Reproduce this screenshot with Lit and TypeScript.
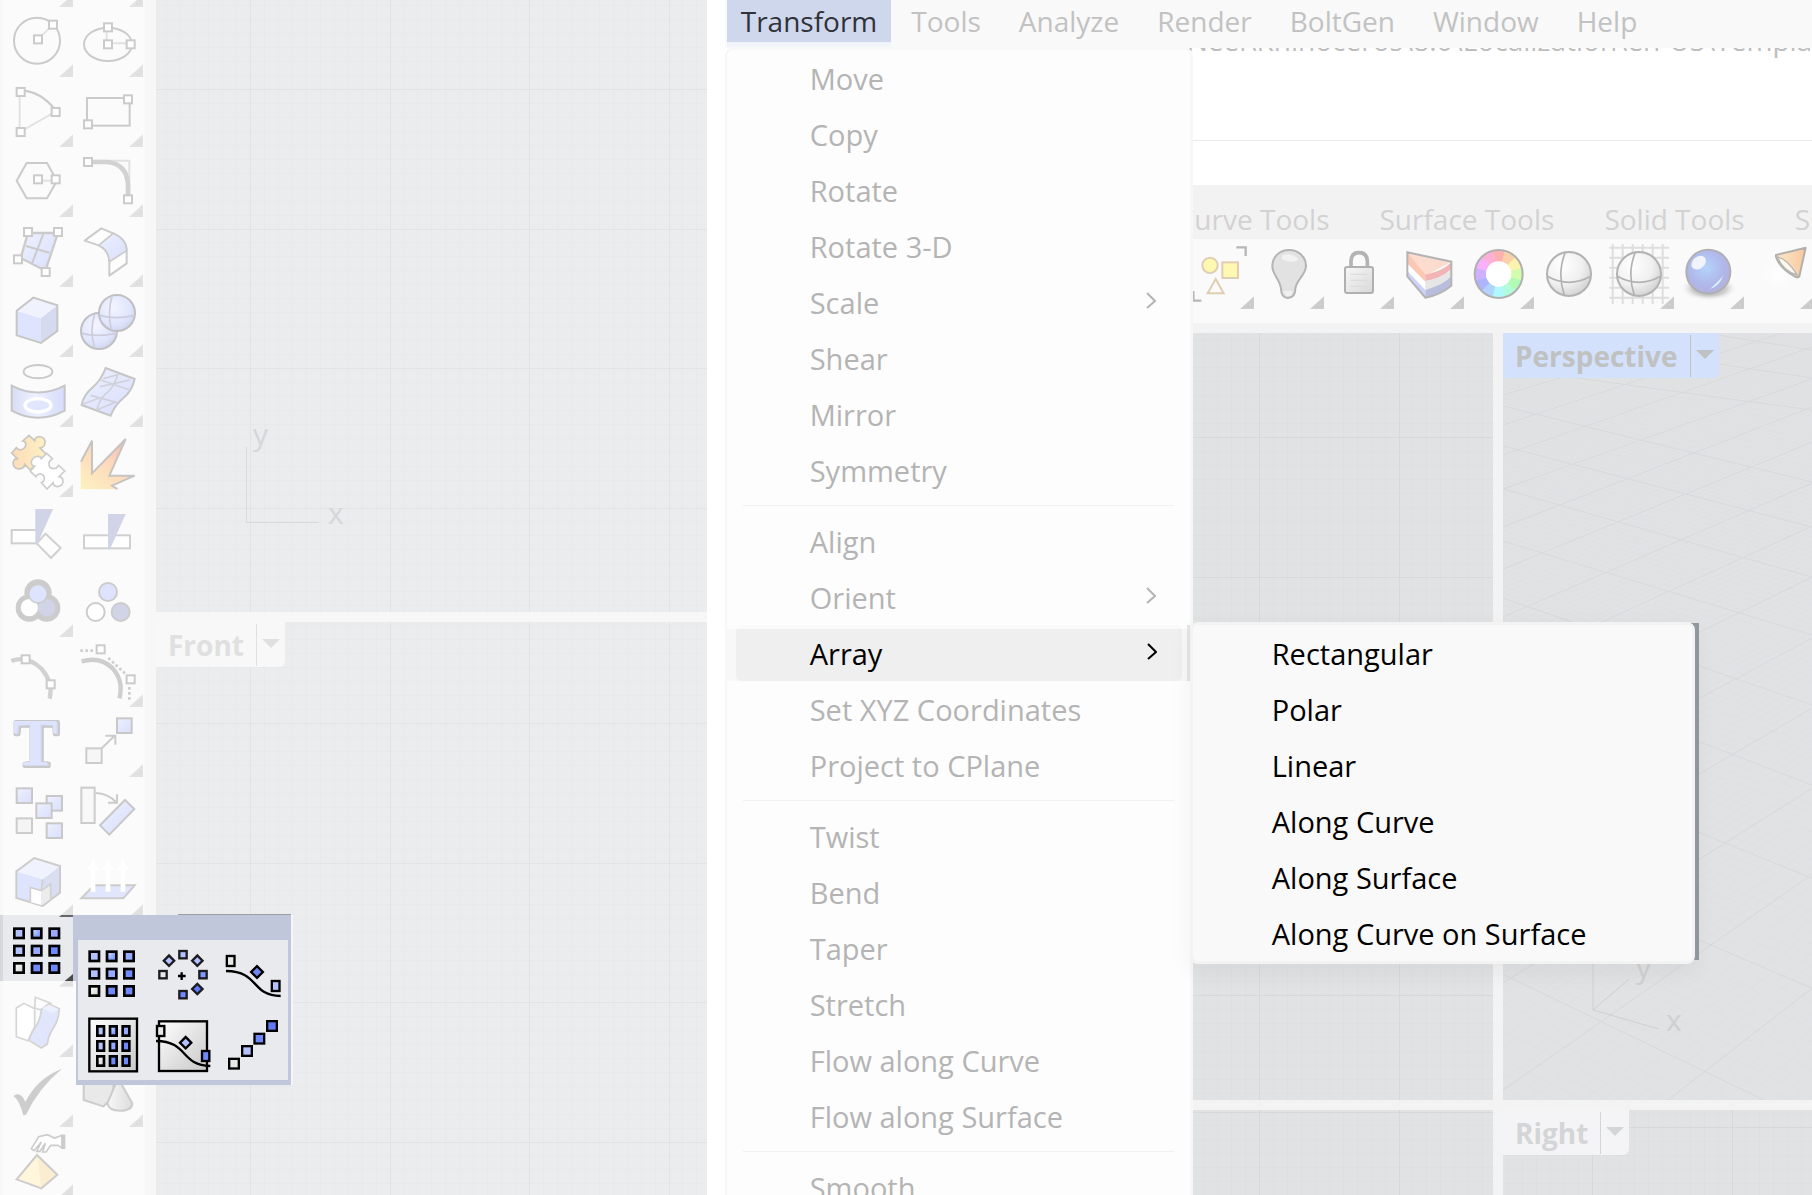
import { LitElement, html, css, svg, nothing } from "lit";
import { customElement, property } from "lit/decorators.js";
import { classMap } from "lit/directives/class-map.js";

/* ---------- shared drawing helpers ---------- */

const G = "#cbcbcb";
const L = "#e2e2e2";

const knob = (x: number, y: number) =>
  svg`<rect x=${x - 12} y=${y - 12} width="24" height="24" fill="#fff" stroke=${G} stroke-width="6"/>`;

const block = (x: number, y: number, fill: string, w = 28, h = 28, line = "#000", sw = 8) =>
  svg`<rect x=${x - w / 2} y=${y - h / 2} width=${w} height=${h} fill=${fill} stroke=${line} stroke-width=${sw}/>`;

const tilt = (x: number, y: number, fill: string, s = 22, line = "#000") =>
  svg`<rect x=${x - s / 2} y=${y - s / 2} width=${s} height=${s} fill=${fill} stroke=${line} stroke-width="7" transform="rotate(45 ${x} ${y})"/>`;

const shades = ["#b3c2ff", "url(#cellBlue)", "#97aaff", "#b3c2ff", "#97aaff", "#7089ff", "url(#cellGrey)", "#7089ff", "#7089ff"];

const nine = (x0: number, y0: number, dx: number, dy: number, w = 28, h = 28) =>
  shades.map((c, i) => block(x0 + (i % 3) * dx, y0 + Math.floor(i / 3) * dy, c, w, h));

const corner = (x: number, y: number) => svg`
  <path d="M${x - 42} ${y} L${x} ${y - 38} V${y} Z" fill="#e2e2e2"/>
  <path d="M${x - 20} ${y - 8} L${x - 7} ${y - 22} V${y - 8} Z" fill="#e6e6e6" stroke="#dadada" stroke-width="2"/>`;

const darkCorner = (x: number, y: number) => svg`
  <path d="M${x - 42} ${y} L${x} ${y - 38} V${y} Z" fill="#cdcdcd"/>
  <path d="M${x - 20} ${y - 8} L${x - 7} ${y - 22} V${y - 8} Z" fill="#d6d6d6" stroke="#c2c2c2" stroke-width="2"/>`;

interface Tool {
  name: string;
  art?: unknown;
  more?: boolean;
}

/* Every row of the tool palette is 210 drawing units high; art repeats its origin every four rows. */
const palette: [Tool, Tool][] = [
  [
    {
      name: "Circle",
      more: true,
      art: svg`<circle cx="111" cy="122" r="69" fill="none" stroke=${G} stroke-width="6"/>
        <path d="M114 118L159 73" stroke=${L} stroke-width="6"/>${knob(159, 74)}${knob(114, 118)}`,
    },
    {
      name: "Ellipse",
      more: true,
      art: svg`<ellipse cx="324" cy="133" rx="72" ry="50" fill="none" stroke=${G} stroke-width="6"/>
        <path d="M320 130V82M324 130H392" stroke=${L} stroke-width="6"/>${knob(324, 82)}${knob(324, 133)}${knob(392, 133)}`,
    },
  ],
  [
    {
      name: "Arc",
      more: true,
      art: svg`<path d="M59 276V396L167 335" fill="none" stroke=${L} stroke-width="6"/>
        <path d="M62 272Q120 272 167 331" fill="none" stroke=${G} stroke-width="7"/>${knob(62, 276)}${knob(62, 396)}${knob(167, 336)}`,
    },
    {
      name: "Rectangle",
      more: true,
      art: svg`<rect x="261" y="294" width="128" height="83" fill="none" stroke=${G} stroke-width="6"/>${knob(384, 298)}${knob(264, 373)}`,
    },
  ],
  [
    {
      name: "Polygon",
      more: true,
      art: svg`<path d="M50 542L80 489H141L171 542L141 595H80Z" fill="none" stroke=${G} stroke-width="6"/>
        <path d="M114 542H165" stroke=${L} stroke-width="6"/>${knob(114, 538)}${knob(167, 538)}`,
    },
    {
      name: "Fillet curves",
      more: true,
      art: svg`<path d="M264 482H388V598" fill="none" stroke=${L} stroke-width="6"/>
        <path d="M264 486H318Q384 490 384 560V598" fill="none" stroke="#d2d2d2" stroke-width="14"/>${knob(264, 486)}${knob(384, 598)}`,
    },
  ],
  [
    {
      name: "Surface from points",
      more: true,
      art: svg`<path d="M84 699H174L136 812L62 774Z" fill="url(#paleBlue)" stroke=${G} stroke-width="7"/>
        <path d="M130 702L96 790M78 738L148 758" stroke=${G} stroke-width="6"/>${knob(84, 696)}${knob(174, 696)}${knob(54, 778)}${knob(137, 816)}`,
    },
    {
      name: "Blend surface",
      more: true,
      art: svg`<path d="M254 722L304 685L340 700Q380 718 380 752V790L328 827V785Q326 750 296 736Z" fill="#fdfdfd" stroke=${G} stroke-width="6" stroke-linejoin="round"/>
        <path d="M296 736L340 700Q380 718 380 752L328 785Q326 750 296 736Z" fill="url(#paleBlue)" stroke=${G} stroke-width="5"/>`,
    },
  ],
  [
    {
      name: "Box",
      more: true,
      art: svg`<path d="M50 92L123 114V189L50 166Z" fill="#dfe4fe"/><path d="M123 114L172 76V153L123 189Z" fill="#d6daee"/>
        <path d="M50 92L100 53L172 76L123 114Z" fill="#f0f2fe"/>
        <path d="M50 92L100 53L172 76V153L123 189L50 166Z" fill="none" stroke="#c6c6c6" stroke-width="6"/>`,
    },
    {
      name: "Boolean union",
      more: true,
      art: svg`<circle cx="297" cy="153" r="54" fill="url(#paleBall)" stroke="#c0c0c2" stroke-width="6"/>
        <path d="M246 160Q290 172 350 160M284 102Q268 150 284 204" fill="none" stroke="#ccd" stroke-width="5"/>
        <circle cx="351" cy="99" r="54" fill="url(#paleBall)" stroke="#c0c0c2" stroke-width="6"/>
        <path d="M300 106Q344 120 404 106M336 48Q322 96 334 150" fill="none" stroke="#ccd" stroke-width="5"/>`,
    },
  ],
  [
    {
      name: "Project curves",
      more: true,
      art: svg`<ellipse cx="114" cy="275" rx="43" ry="20" fill="none" stroke="#cacaca" stroke-width="6"/>
        <path d="M35 317Q114 358 194 317V392Q114 435 35 392Z" fill="url(#paleBand)" stroke="#c6c6c6" stroke-width="6"/>
        <ellipse cx="114" cy="376" rx="39" ry="20" fill="#e2e6fd" stroke="#fff" stroke-width="10"/>`,
    },
    {
      name: "Rebuild surface",
      more: true,
      art: svg`<path d="M317 264L404 297Q396 334 370 354Q342 378 332 407L245 375Q250 346 276 324Q304 300 317 264Z" fill="url(#paleBlue)" stroke="#c6c6c6" stroke-width="6"/>
        <path d="M354 282Q342 318 326 334Q300 352 290 390M302 300L390 330M272 346L352 368M310 296L360 282M300 320L390 300M250 372L304 352M290 390L348 366" fill="none" stroke="#d0d1da" stroke-width="5"/>`,
    },
  ],
  [
    {
      name: "Join",
      more: true,
      art: svg`<path d="M35 519L49 503C56 514 72 510 76 500C80 490 76 485 68 483L87 466L104 482C106 466 132 466 135 484C136 498 126 503 120 504L138 522L91 570L74 553C72 570 46 572 40 554C38 540 44 537 52 536Z" fill="url(#paleOrange)" stroke="#c8c6c2" stroke-width="5"/>
        <path d="M140 520L157 536C140 546 146 567 162 566C172 566 174 558 176 556L194 573L177 590C190 592 192 604 186 614C176 624 160 620 159 608L141 627L124 608C134 604 136 594 130 586C122 578 110 582 108 590L91 574L104 558C92 558 92 544 98 536C106 526 122 528 124 536Z" fill="#fff" stroke="#cdcdcd" stroke-width="5"/>`,
    },
    {
      name: "Explode",
      art: svg`<path d="M242 545L276 480V580L376 477L328 587L404 587L338 617L356 628H242Z" fill="url(#blast)"/>
        <path d="M243 545L276 482V580L377 477L328 587H404L336 617L352 627" fill="none" stroke="#c6c4c2" stroke-width="6"/>`,
    },
  ],
  [
    {
      name: "Trim",
      art: svg`<rect x="35" y="750" width="76" height="40" fill="#fff" stroke="#d0d0d0" stroke-width="6"/>
        <path d="M137 761L182 804L153 834L110 790Z" fill="#fdfdfd" stroke="#d0d0d0" stroke-width="6"/>
        <path d="M106 687H159L112 792L106 790Z" fill="#d0d4e6"/>`,
    },
    {
      name: "Split",
      art: svg`<rect x="252" y="766" width="138" height="39" fill="#fff" stroke="#d0d0d0" stroke-width="6"/>
        <path d="M324 702H377L330 808H324Z" fill="#d0d4e6"/>`,
    },
  ],
  [
    {
      name: "Group",
      more: true,
      art: svg`<circle cx="114" cy="99" r="41" fill="#ccc"/><circle cx="88" cy="144" r="41" fill="#ccc"/><circle cx="140" cy="144" r="41" fill="#ccc"/>
        <circle cx="140" cy="143" r="26" fill="#d0d4e6"/><circle cx="88" cy="143" r="26" fill="#fff"/>
        <circle cx="114" cy="101" r="28" fill="#dfe4fe" stroke="#ccc" stroke-width="5"/>`,
    },
    {
      name: "Ungroup",
      art: svg`<circle cx="324" cy="96" r="27" fill="#dfe4fe" stroke="#ccc" stroke-width="6"/>
        <circle cx="287" cy="156" r="27" fill="#fff" stroke="#ccc" stroke-width="6"/>
        <circle cx="362" cy="156" r="27" fill="#d0d4e6" stroke="#ccc" stroke-width="6"/>`,
    },
  ],
  [
    {
      name: "Edit points",
      art: svg`<path d="M34 303Q82 284 126 328Q160 368 149 416" fill="none" stroke="#d2d2d2" stroke-width="13"/>${knob(77, 298)}${knob(152, 373)}`,
    },
    {
      name: "Control points",
      more: true,
      art: svg`<path d="M245 304Q300 288 338 325Q372 364 358 415" fill="none" stroke="#cecece" stroke-width="13"/>
        <path d="M241 272H285M325 294L378 343M388 381V420" fill="none" stroke="#cecece" stroke-width="8" stroke-dasharray="8 7"/>${knob(302, 268)}${knob(392, 358)}`,
    },
  ],
  [
    {
      name: "Text",
      art: svg`<text x="110" y="619" class="glyph" text-anchor="middle" fill="#d6daee" stroke="#c8c8c8" stroke-width="12" stroke-linejoin="round">T</text>
        <text x="110" y="619" class="glyph" text-anchor="middle" fill="#d3d8ee">T</text>
        <text x="106" y="616" class="glyph" text-anchor="middle" fill="#dfe4fe">T</text>`,
    },
    {
      name: "Move",
      more: true,
      art: svg`${block(373, 497, "url(#paleBlue)", 44, 44, "#c8c8c8", 6)}${block(282, 587, "#f6f6f6", 46, 44, "#ccc", 6)}
        <path d="M305 565L344 527M316 527H346V554" fill="none" stroke="#ccc" stroke-width="6"/>`,
    },
  ],
  [
    {
      name: "Copy",
      art: svg`${block(73, 707, "url(#paleBlue)", 46, 44, "#c8c8c8", 6)}${block(163, 730, "url(#paleBlue)", 46, 44, "#c8c8c8", 6)}
        ${block(132, 752, "url(#paleBlue)", 46, 44, "#c8c8c8", 6)}${block(73, 797, "#f4f4f4", 46, 44, "#ccc", 6)}${block(163, 812, "url(#paleBlue)", 46, 44, "#c8c8c8", 6)}`,
    },
    {
      name: "Rotate",
      art: svg`${block(264, 736, "#f8f8f8", 40, 106, "#ccc", 6)}
        <path d="M375 720L403 747L328 824L300 796Z" fill="url(#paleBlue)" stroke="#c8c8c8" stroke-width="6"/>
        <path d="M287 699Q324 700 350 728M324 728H351V703" fill="none" stroke="#ccc" stroke-width="6"/>`,
    },
  ],
  [
    {
      name: "Solid editing",
      more: true,
      art: svg`<path d="M49 94L128 118V198L49 174Z" fill="#dfe4fe"/><path d="M128 118L180 78V158L128 198Z" fill="#dadef2"/>
        <path d="M49 94L103 54L180 78L128 118Z" fill="#f0f2fe"/>
        <path d="M49 94L103 54L180 78V158L128 198L49 174Z" fill="none" stroke="#ccc" stroke-width="6"/>
        <path d="M91 144L124 152V195L91 186Z" fill="#fff"/><path d="M124 152L152 132V176L126 196Z" fill="#ececec"/>
        <path d="M91 186V142L124 152L152 132V176M124 152L128 118" fill="none" stroke="#d0d0d0" stroke-width="5"/>`,
    },
    {
      name: "Flow along surface",
      more: true,
      art: svg`<path d="M282 136H404L370 175H244Z" fill="#e2e6fd" stroke="#ccc" stroke-width="6"/>
        <path d="M261 90L279 58L297 90H286V155H272V90ZM306 90L324 58L342 90H331V155H317V90ZM351 90L369 58L387 90H376V155H362V90Z" fill="#fff"/>`,
    },
  ],
  [
    { name: "Array" },
    { name: "Align" },
  ],
  [
    {
      name: "Cage edit",
      more: true,
      art: svg`<path d="M49 504L72 490L104 506V560L84 602L49 590Z" fill="#fff" stroke="#d6d6d6" stroke-width="5"/>
        <path d="M106 472L152 490L124 510L104 504Z" fill="#fdfdfd" stroke="#d6d6d6" stroke-width="5"/>
        <path d="M124 508L146 492L178 506Q176 544 156 570Q144 590 142 612L124 624L88 602Q90 584 106 562Q122 540 124 508Z" fill="#e2e6fd" stroke="#d2d2d2" stroke-width="5"/>
        <path d="M126 504L148 494L176 508L158 520Z" fill="#eceffe"/>`,
    },
    { name: "Deform" },
  ],
  [
    {
      name: "Check objects",
      more: true,
      art: svg`<path d="M40 768Q62 752 76 786Q112 714 186 686Q116 744 78 824L70 826Q58 778 40 768Z" fill="#cdcdcd"/>`,
    },
    {
      name: "Primitives",
      more: true,
      art: svg`<path d="M251 722H340V772L310 799L251 780Z" fill="#e9e9e9" stroke="#ccc" stroke-width="6"/>
        <path d="M354 715L397 790Q396 812 360 812Q326 812 322 790Z" fill="url(#greyCone)" stroke="#ccc" stroke-width="6"/>`,
    },
  ],
  [
    {
      name: "Gumball",
      more: true,
      art: svg`<path d="M186 886L164 894L142 884L116 890L94 926L102 932L124 906L110 934H120L136 910L128 936L138 936L152 916H174L186 924Z" fill="#fff" stroke="#ccc" stroke-width="5"/>
        <path d="M184 884H196V927H184Z" fill="#ccc"/>
        <path d="M111 945L50 1018L124 1045Z" fill="#fff6dc"/><path d="M111 945L124 1045L172 1004Z" fill="#faedd0"/>
        <path d="M111 945L50 1018L124 1045L172 1004Z" fill="none" stroke="#ccc" stroke-width="6"/>`,
    },
    { name: "More tools" },
  ],
];

const flyout = [
  { name: "Rectangular array", art: nine(283, 349, 52, 52) },
  {
    name: "Polar array",
    art: svg`${block(549, 344, "#b3c2ff", 22, 22, "#1c1c20", 7)}${tilt(592, 362, "#b3c2ff", 22, "#1c1c20")}${block(609, 404, "#8098ff", 22, 22, "#1c1c20", 7)}
      ${tilt(592, 447, "#5f7bf5", 22, "#1c1c20")}${block(549, 464, "#7089ff", 22, 22, "#1c1c20", 7)}${block(489, 404, "#e8e8e8", 22, 22, "#1c1c20", 7)}
      ${tilt(507, 362, "#b3c2ff", 22, "#1c1c20")}<path d="M545 397V420M534 408H557" stroke="#000" stroke-width="7"/>`,
  },
  {
    name: "Array along curve",
    art: svg`<path d="M678 393C780 394 750 466 842 468" fill="none" stroke="#000" stroke-width="7"/>
      ${block(692, 363, "#e8e8e8", 23, 30, "#000", 7)}${tilt(771, 396, "#6f87ee", 25)}${block(827, 438, "#b3c2ff", 23, 30, "#000", 7)}`,
  },
  {
    name: "Array along surface",
    art: svg`<rect x="268" y="536" width="143" height="158" fill="url(#panel)" stroke="#000" stroke-width="7"/>${nine(302, 573, 38, 45, 20, 28)}`,
  },
  {
    name: "Array along curve on surface",
    art: svg`<rect x="477" y="544" width="144" height="149" fill="url(#panel)" stroke="#000" stroke-width="7"/>
      <path d="M468 603C566 604 540 676 631 678" fill="none" stroke="#000" stroke-width="7"/>
      ${block(482, 573, "#e8e8e8", 22, 30, "#000", 7)}${tilt(557, 608, "#b3c2ff", 24)}${block(617, 648, "#7089ff", 22, 30, "#000", 7)}`,
  },
  {
    name: "Linear array",
    art: svg`${block(816, 558, "#5f7bf5", 29, 29, "#000", 7)}${block(778, 596, "#7089ff", 29, 29, "#000", 7)}
      ${block(741, 633, "#b3c2ff", 29, 29, "#000", 7)}${block(702, 671, "#e8e8e8", 29, 29, "#000", 7)}`,
  },
];

const ball = (cx: number) => svg`
  <circle cx=${cx} cy="117" r="66" fill="url(#greyBall)" stroke="#b2b2b2" stroke-width="6"/>
  <path d="M${cx - 65} 124Q${cx} 160 ${cx + 65} 124M${cx - 12} 54Q${cx - 36} 116 ${cx - 14} 180" fill="none" stroke="#b2b2b2" stroke-width="5"/>`;

const wheel = ["#fcb0b0", "#fcd0a8", "#fcf4ac", "#d4fcac", "#b0fcb4", "#b0fcdc", "#b0f8fc", "#b0d4fc", "#b0b4fc", "#d0b0fc", "#f8b0fc", "#fcb0d8"];
const wedge = (i: number) => {
  const p = (r: number, k: number) => {
    const t = ((k * 30 - 105) * Math.PI) / 180;
    return `${(26 + r * Math.cos(t)).toFixed(1)} ${(117 + r * Math.sin(t)).toFixed(1)}`;
  };
  return `M${p(38, i)}L${p(72, i)}A72 72 0 0 1 ${p(72, i + 1.04)}L${p(38, i + 1.04)}Z`;
};

const ribbon: { name: string; x: number; more?: boolean; art: unknown }[] = [
  {
    name: "Select objects",
    x: -18,
    more: true,
    art: svg`<circle cx="60" cy="91" r="23" fill="#fff8b0" stroke="#e0ceb4" stroke-width="6"/>
      <rect x="97" y="82" width="47" height="47" fill="#fff8b0" stroke="#e0ceb4" stroke-width="6"/>
      <path d="M77 132L101 175H53Z" fill="none" stroke="#e0ceb4" stroke-width="6"/>
      <path d="M139 37H167V63M10 168V197H34" fill="none" stroke="#b6b6b6" stroke-width="7"/>`,
  },
  {
    name: "Show or hide",
    x: 192,
    more: true,
    art: svg`<path d="M298 45C266 45 247 68 247 94C247 120 270 132 273 162Q274 189 294 189Q316 188 316 160C320 132 348 120 348 92C347 66 326 45 298 45Z" fill="#e2e2e2" stroke="#b4b4b4" stroke-width="6"/>
      <path d="M276 62Q304 50 326 74Q300 88 276 72Z" fill="#f2f2f2"/><path d="M280 168H308L302 183H288Z" fill="#f0f0f0"/>`,
  },
  {
    name: "Lock",
    x: 402,
    more: true,
    art: svg`<path d="M483 98V78Q484 53 507 53Q531 53 532 78V98" fill="none" stroke="#b4b4b4" stroke-width="11"/>
      <rect x="465" y="96" width="84" height="78" rx="6" fill="url(#lockFace)" stroke="#b0b0b0" stroke-width="6"/>
      <path d="M482 118H532M482 136H532M482 154H532" stroke="#dcdcdc" stroke-width="4"/>`,
  },
  {
    name: "Layers",
    x: 612,
    more: true,
    art: svg`<path d="M652 52L784 80L706 122Z" fill="#fcdccf"/><path d="M652 52L706 119V140L652 86Z" fill="#fcc8b4"/>
      <path d="M652 86L706 140V165L652 108Z" fill="#fff"/><path d="M652 108L706 165V188L652 124Z" fill="#ccd2fa"/>
      <path d="M706 119Q760 108 784 82V102Q750 134 706 138Z" fill="#f2b4b4"/><path d="M706 138Q760 128 784 102V124Q750 158 706 165Z" fill="#e6e6e6"/>
      <path d="M706 165Q760 150 784 124V152Q750 180 706 188Z" fill="#b8bedc"/>
      <path d="M652 52L784 80V152Q750 180 706 188L652 124Z" fill="none" stroke="#b4b4b4" stroke-width="6"/>`,
  },
  {
    name: "Display colour",
    x: -78,
    more: true,
    art: svg`${wheel.map((c, i) => svg`<path d=${wedge(i)} fill=${c}/>`)}
      <circle cx="26" cy="117" r="38" fill="#fff"/>
      <circle cx="26" cy="117" r="72" fill="none" stroke="#b0b0b0" stroke-width="6"/>`,
  },
  { name: "Shaded viewport", x: 132, art: ball(237) },
  {
    name: "Wireframe viewport",
    x: 342,
    more: true,
    art: svg`<path d="M368 27V207M398 27V207M428 27V207M458 27V207M488 27V207M518 27V207M358 38H537M358 68H537M358 98H537M358 128H537M358 158H537M358 188H537" stroke="#dedede" stroke-width="6"/>${ball(447)}`,
  },
  {
    name: "Rendered viewport",
    x: 552,
    more: true,
    art: svg`<ellipse cx="657" cy="160" rx="86" ry="38" fill="url(#groundShade)"/>
      <circle cx="655" cy="110" r="66" fill="url(#glass)" stroke="#b0b0b4" stroke-width="6"/>
      <ellipse cx="626" cy="83" rx="24" ry="18" transform="rotate(-40 626 83)" fill="#fff" opacity=".8"/>
      <path d="M660 162Q690 152 699 122Q690 134 660 162Z" fill="#d8f4fa"/>`,
  },
  {
    name: "Spotlight",
    x: 762,
    more: true,
    art: svg`<circle cx="860" cy="120" r="60" fill="url(#beam)"/>
      <path d="M858 60L947 38L928 124Q924 130 914 124Q870 100 858 66Z" fill="url(#lampShade)" stroke="#b0b0ac" stroke-width="6" stroke-linejoin="round"/>
      <path d="M862 66Q890 70 922 120Q880 110 862 66Z" fill="#fff8ec" stroke="#b6b6b2" stroke-width="4"/>`,
  },
];

const defs = html`<svg class="defs" width="0" height="0" aria-hidden="true">
  <defs>
    <linearGradient id="paleBlue" x1="0" y1="0" x2="1" y2="1"><stop offset="0" stop-color="#eef1fe" /><stop offset="1" stop-color="#d9defd" /></linearGradient>
    <linearGradient id="paleBand"><stop offset="0" stop-color="#d8ddf4" /><stop offset=".45" stop-color="#eef1fe" /><stop offset="1" stop-color="#d6dcfb" /></linearGradient>
    <radialGradient id="paleBall" cx=".4" cy=".35" r=".7"><stop offset="0" stop-color="#f4f5fe" /><stop offset=".7" stop-color="#dfe4fd" /><stop offset="1" stop-color="#cfd4ec" /></radialGradient>
    <linearGradient id="paleOrange"><stop offset="0" stop-color="#fddcb8" /><stop offset="1" stop-color="#fdf0c4" /></linearGradient>
    <linearGradient id="blast" x1="0" y1="1" x2=".8" y2="0"><stop offset="0" stop-color="#fdf2c0" /><stop offset=".6" stop-color="#fdd8bc" /><stop offset="1" stop-color="#f9b8b0" /></linearGradient>
    <linearGradient id="greyCone"><stop offset="0" stop-color="#f8f8f8" /><stop offset="1" stop-color="#dcdcdc" /></linearGradient>
    <radialGradient id="cellBlue" cx=".3" cy=".3" r=".8"><stop offset="0" stop-color="#b8d0ff" /><stop offset="1" stop-color="#6f88f8" /></radialGradient>
    <linearGradient id="cellGrey" x1="0" y1="0" x2="1" y2="1"><stop offset="0" stop-color="#fff" /><stop offset="1" stop-color="#cfcfcf" /></linearGradient>
    <linearGradient id="panel" x1="0" y1="0" x2="1" y2="1"><stop offset="0" stop-color="#fff" /><stop offset="1" stop-color="#c8c8c8" /></linearGradient>
    <radialGradient id="greyBall" cx=".35" cy=".3" r=".75"><stop offset="0" stop-color="#fff" /><stop offset=".6" stop-color="#f0f0f0" /><stop offset="1" stop-color="#d2d2d2" /></radialGradient>
    <linearGradient id="lockFace" x1="0" y1="0" x2="1" y2="1"><stop offset="0" stop-color="#f8f8f8" /><stop offset="1" stop-color="#d8d8d8" /></linearGradient>
    <radialGradient id="glass" cx=".45" cy=".4" r=".65"><stop offset="0" stop-color="#b4d4fb" /><stop offset=".6" stop-color="#b0b8ea" /><stop offset="1" stop-color="#b4b0dc" /></radialGradient>
    <radialGradient id="groundShade"><stop offset="0" stop-color="#b4b4b4" /><stop offset=".6" stop-color="#cccccc" /><stop offset="1" stop-color="#fafafa" stop-opacity="0" /></radialGradient>
    <radialGradient id="beam"><stop offset="0" stop-color="#fff" /><stop offset="1" stop-color="#fafafa" stop-opacity="0" /></radialGradient>
    <linearGradient id="lampShade"><stop offset="0" stop-color="#fce8c8" /><stop offset="1" stop-color="#f8c8a0" /></linearGradient>
  </defs>
</svg>`;

/* ---------- viewport grids ---------- */

@customElement("plan-grid")
export class PlanGrid extends LitElement {
  @property({ type: Number }) ox = 0;
  @property({ type: Number }) oy = 0;
  @property() minor = "#e8e9eb";
  @property() major = "#e1e3e5";

  static styles = css`
    :host {
      display: block;
      position: absolute;
      inset: 0;
    }
    .sheet {
      display: block;
      width: 100%;
      height: 100%;
    }
  `;

  private path(every: boolean) {
    let d = "";
    for (let i = -60; i < 140; i++) {
      if ((i % 10 === 0) !== every) continue;
      const x = this.ox + Math.round((i * 279) / 20);
      const y = this.oy + Math.round((i * 279) / 20);
      if (x >= 0) d += `M${x} 0V2400`;
      if (y >= 0) d += `M0 ${y}H2400`;
    }
    return d;
  }

  render() {
    return html`<svg class="sheet" shape-rendering="crispEdges" aria-hidden="true">
      <path d=${this.path(false)} stroke=${this.minor} fill="none" />
      <path d=${this.path(true)} stroke=${this.major} fill="none" />
    </svg>`;
  }
}

@customElement("tilted-grid")
export class TiltedGrid extends LitElement {
  static styles = css`
    :host {
      display: block;
      position: absolute;
      inset: 0;
    }
    .sheet {
      display: block;
      width: 100%;
      height: 100%;
    }
  `;

  /* Height of each main line at the left edge and 309 units to its right. */
  private falling = [[-80, -28], [-58, -8], [-32, 17], [-2, 45], [35, 77], [73, 149], [113, 194], [156, 244], [208, 302], [265, 372], [333, 452], [420, 545], [523, 655], [641, 790], [782, 950], [950, 1150]];
  private rising = [[10, -68], [34, -50], [62, -30], [92, -10], [122, 14], [156, 46], [194, 74], [236, 109], [284, 150], [334, 193], [395, 244], [470, 305], [555, 375], [650, 455], [757, 541], [895, 655], [1060, 790]];

  render() {
    const main: string[] = [];
    const fine: string[] = [];
    for (const set of [this.falling, this.rising]) {
      set.forEach(([l, r], i) => {
        main.push(`M0 ${l}L309 ${r}`);
        const next = set[i + 1];
        if (!next) return;
        for (let k = 1; k < 10; k++) {
          const a = l + ((next[0] - l) * k) / 10;
          const b = r + ((next[1] - r) * k) / 10;
          fine.push(`M0 ${a.toFixed(1)}L309 ${b.toFixed(1)}`);
        }
      });
    }
    return html`<svg class="sheet" viewBox="0 0 309 767" preserveAspectRatio="xMidYMin slice" aria-hidden="true">
      <path d=${fine.join("")} stroke="#dddfe1" stroke-width="1" opacity=".6" fill="none" />
      <path d=${main.join("")} stroke="#d7d9db" stroke-width="1" fill="none" />
    </svg>`;
  }
}

/* ---------- application ---------- */

interface Entry {
  label: string;
  sub?: boolean;
  open?: boolean;
}

@customElement("app-root")
export class AppRoot extends LitElement {
  static styles = css`
    :host {
      display: block;
      font-family: "Open Sans", "Noto Sans", sans-serif;
      font-size: 28px;
      line-height: 40px;
      color: #b4b4b4;
    }
    * {
      box-sizing: border-box;
    }
    button {
      appearance: none;
      border: 0;
      margin: 0;
      padding: 0;
      background: none;
      font: inherit;
      color: inherit;
      text-align: left;
      white-space: nowrap;
    }
    ul {
      list-style: none;
      margin: 0;
      padding: 0;
    }
    .defs {
      position: absolute;
    }
    .screen {
      display: grid;
      grid-template-columns: 65fr 100fr;
      column-gap: 18px;
      height: 100vh;
      overflow: hidden;
      background: #fff;
    }
    .left {
      display: flex;
      min-width: 0;
      min-height: 0;
      background: #f7f7f7;
      padding-left: 3px;
    }
    .palette {
      display: grid;
      grid-template-columns: 70px 70px;
      grid-template-rows: 7px;
      grid-auto-rows: 70px;
      flex: none;
      padding-right: 2px;
      margin-right: 11px;
      height: 100vh;
      background: #fbfbfb;
    }
    .tool {
      position: relative;
      display: block;
    }
    .tool svg,
    .pick svg,
    .cmd svg {
      display: block;
      width: 70px;
      height: 70px;
      overflow: visible;
    }
    .stub {
      display: flex;
      align-items: flex-end;
      overflow: hidden;
    }
    .stub svg {
      flex: none;
      width: 70px;
      height: 70px;
    }
    .glyph {
      font-family: "Liberation Serif", serif;
      font-weight: 700;
      font-size: 200px;
    }
    .active {
      z-index: 2;
    }
    .active::before {
      content: "";
      position: absolute;
      inset: -2px 0 6px -3px;
      background: #e8eaee;
      border-left: 3px solid #d6d8dc;
    }
    .active svg {
      position: relative;
    }
    .flyout {
      position: absolute;
      left: 73px;
      top: -2px;
      z-index: 3;
      padding: 25px 3px 5px 2px;
      background: #c1c7da;
      box-shadow: 2px 0 0 #f4f5f8;
    }
    .flyout::before {
      content: "";
      position: absolute;
      left: -3px;
      top: 0;
      width: 3px;
      height: 66px;
      background: #c1c7da;
    }
    .flyout::after {
      content: "";
      position: absolute;
      right: 0;
      top: -1px;
      width: 113px;
      height: 1px;
      background: #9b9fa3;
    }
    .picks {
      display: grid;
      grid-template-columns: repeat(3, 70px);
      background: #e8eaee;
    }
    .pick {
      display: block;
      height: 70px;
    }
    .stack {
      flex: 1;
      min-width: 0;
      display: grid;
      grid-template-rows: 612px 1fr;
      row-gap: 10px;
    }
    .view {
      position: relative;
      overflow: hidden;
      min-width: 0;
      min-height: 0;
      background: #ebecee;
    }
    .right .view {
      background: #e1e2e4;
    }
    .tag {
      position: relative;
      display: inline-flex;
      align-items: stretch;
      height: 45px;
      background: #f8f8f8;
      border-radius: 0 0 6px 0;
      font-weight: 700;
      color: #e0e0e0;
    }
    .right .tag {
      background: #f4f4f6;
      color: #d4d5d6;
    }
    .right .tag.current {
      background: #d3e1fd;
      color: #c0c1c1;
    }
    .tag-name {
      padding: 0 12px;
    }
    .tag-more {
      width: 29px;
      height: 42px;
      margin-top: 2px;
      border-left: 1px solid currentColor;
      display: flex;
      justify-content: center;
      padding-top: 15px;
    }
    .axes {
      position: absolute;
      left: 0;
      top: 0;
      overflow: visible;
      width: 309px;
      height: 767px;
      font-size: 30px;
    }
    .right {
      position: relative;
      display: flex;
      flex-direction: column;
      min-width: 0;
      min-height: 0;
      background: #f3f3f3;
    }
    .menubar {
      position: relative;
      z-index: 2;
      display: flex;
      align-items: flex-start;
      gap: 2px;
      height: 48px;
      padding-left: 2px;
      background: #f9f9f9;
      color: #c2c2c2;
    }
    .menubar button {
      height: 42px;
      padding: 0 18px;
    }
    .menubar .chosen {
      padding: 0 14px;
      background: #cfd7ed;
      color: #303238;
      box-shadow: 0 5px 0 #f1f4fa;
    }
    .command {
      height: 93px;
      background: #fff;
      border-bottom: 1px solid #e9e9ee;
      padding-left: 462px;
      overflow: hidden;
      white-space: nowrap;
    }
    .history {
      display: block;
      margin-top: -28px;
      color: #bdbdbd;
    }
    .prompt {
      height: 44px;
      background: #fff;
    }
    .tabs {
      display: flex;
      gap: 50px;
      height: 54px;
      padding: 14px 0 0 452px;
      overflow: hidden;
      background: #f2f2f2;
      color: #d2d2d2;
    }
    .ribbon {
      display: flex;
      height: 84px;
      padding-left: 459px;
      overflow: hidden;
      background: #fafafa;
    }
    .cmd {
      flex: none;
      display: block;
      height: 70px;
    }
    .views {
      flex: 1;
      min-height: 0;
      display: grid;
      grid-template-columns: 768fr 309fr;
      grid-template-rows: 767fr 85fr;
      gap: 10px;
      margin-top: 10px;
    }
    .menu {
      position: absolute;
      left: 0;
      top: 48px;
      width: 468px;
      z-index: 3;
      background: #fdfdfd;
      border: 2px solid #f7f7f8;
      border-right-width: 3px;
      border-radius: 8px;
      font-size: 29px;
    }
    .row {
      position: relative;
      height: 56px;
      padding: 0 9px;
    }
    .row button {
      display: flex;
      align-items: center;
      justify-content: space-between;
      width: 100%;
      height: 56px;
      padding: 1px 25px 0 74px;
      border-radius: 5px;
    }
    .row.open {
      background: linear-gradient(#fdfdfd 4px, #f8f8f8 4px);
      border-right: 3px solid #e4e4e4;
      padding-right: 5px;
    }
    .row.open > button {
      background: linear-gradient(#fafafa 4px, #efefef 4px);
      color: #000;
    }
    .rule {
      height: 15px;
      padding: 7px 16px;
    }
    .rule::before {
      content: "";
      display: block;
      height: 1px;
      background: #f1f1f2;
    }
    .chev {
      width: 10px;
      height: 17px;
      margin-top: -4px;
    }
    .submenu {
      position: absolute;
      left: 463px;
      top: -3px;
      width: 505px;
      background: #f9f9f9;
      border: 3px solid #f3f3f4;
      border-radius: 8px;
      box-shadow: 0 8px 24px rgba(0, 0, 0, 0.05);
      color: #000;
    }
    .edge {
      position: absolute;
      left: 960px;
      top: -2px;
      width: 12px;
      height: 337px;
      background: #9299a1;
    }
    .submenu .row {
      padding: 0;
    }
    .submenu .row button {
      padding-left: 79px;
    }
  `;

  private menus = ["Transform", "Tools", "Analyze", "Render", "BoltGen", "Window", "Help"];
  private tabs = ["Curve Tools", "Surface Tools", "Solid Tools", "SubD Tools"];
  private entries: (Entry | null)[] = [
    { label: "Move" },
    { label: "Copy" },
    { label: "Rotate" },
    { label: "Rotate 3-D" },
    { label: "Scale", sub: true },
    { label: "Shear" },
    { label: "Mirror" },
    { label: "Symmetry" },
    null,
    { label: "Align" },
    { label: "Orient", sub: true },
    { label: "Array", sub: true, open: true },
    { label: "Set XYZ Coordinates" },
    { label: "Project to CPlane" },
    null,
    { label: "Twist" },
    { label: "Bend" },
    { label: "Taper" },
    { label: "Stretch" },
    { label: "Flow along Curve" },
    { label: "Flow along Surface" },
    null,
    { label: "Smooth" },
  ];
  private arrays = ["Rectangular", "Polar", "Linear", "Along Curve", "Along Surface", "Along Curve on Surface"];

  private tool(t: Tool, row: number, col: number) {
    const x = col ? 219 : 9;
    const y = row === 16 ? 861 : 21 + (row % 4) * 210;
    if (t.name === "Array") {
      return html`<div class="tool active">
        <svg viewBox="9 231 210 210" role="img" aria-label="Array">
          ${corner(219, 440)} ${nine(57, 280, 53, 52)}
          <path d="M177 231L184 225H219V231Z" fill="#666" />
          <path d="M194 423L219 402V423Z" fill="#4a4a4a" />
        </svg>
        <div class="flyout">
          <div class="picks">
            ${flyout.map(
              (f, i) => html`<button class="pick" aria-label=${f.name}>
                <svg viewBox="${234 + (i % 3) * 210} ${300 + Math.floor(i / 3) * 210} 210 210">${f.art}</svg>
              </button>`
            )}
          </div>
        </div>
      </div>`;
    }
    return html`<button class="tool" aria-label=${t.name}>
      <svg viewBox="${x} ${y} 210 210">${t.more ? corner(x + 210, y + 210) : nothing}${t.art ?? nothing}</svg>
    </button>`;
  }

  private tag(name: string, current = false) {
    return html`<div class=${classMap({ tag: true, current })}>
      <button class="tag-name">${name}</button>
      <button class="tag-more" aria-label="${name} options">
        <svg width="18" height="10" viewBox="0 0 18 10"><path d="M0 0H18L9 9Z" fill="currentColor" /></svg>
      </button>
    </div>`;
  }

  private row(e: Entry | null) {
    if (!e) return html`<li class="rule" role="separator"></li>`;
    return html`<li class=${classMap({ row: true, open: !!e.open })}>
      <button>
        <span>${e.label}</span>
        ${e.sub
          ? html`<svg class="chev" viewBox="0 0 10 17"><path d="M1 1L9 9L1 16" fill="none" stroke="currentColor" stroke-width="2" /></svg>`
          : nothing}
      </button>
      ${e.open
        ? html`<div class="edge"></div>
            <ul class="submenu">
              ${this.arrays.map((a) => html`<li class="row"><button>${a}</button></li>`)}
            </ul>`
        : nothing}
    </li>`;
  }

  render() {
    return html`${defs}
      <main class="screen">
        <section class="left">
          <div class="palette">
            ${[0, 1].map(() => html`<div class="stub"><svg viewBox="0 0 210 210">${corner(210, 210)}</svg></div>`)}
            ${palette.map((pair, r) => pair.map((t, c) => this.tool(t, r, c)))}
          </div>
          <div class="stack">
            <div class="view">
              <plan-grid .ox=${94} .oy=${89}></plan-grid>
              <svg class="axes" aria-hidden="true">
                <path d="M90 447V522H163" fill="none" stroke="#d9dadc" shape-rendering="crispEdges" />
                <text x="97" y="445" fill="#d6d7d8">y</text>
                <text x="172" y="524" fill="#d6d7d8">x</text>
              </svg>
            </div>
            <div class="view">
              <plan-grid .ox=${94} .oy=${101}></plan-grid>
              ${this.tag("Front")}
            </div>
          </div>
        </section>
        <section class="right">
          <nav class="menubar">
            ${this.menus.map((m, i) => html`<button class=${classMap({ chosen: i === 0 })}>${m}</button>`)}
          </nav>
          <div class="command"><span class="history">Neel\\Rhinoceros\\8.0\\Localization\\en-US\\Template</span></div>
          <div class="prompt"></div>
          <div class="tabs">${this.tabs.map((t) => html`<button>${t}</button>`)}</div>
          <div class="ribbon">
            ${ribbon.map(
              (r) => html`<button class="cmd" aria-label=${r.name}>
                <svg viewBox="${r.x} 12 210 210">${r.art}${r.more ? darkCorner(r.x + 210, 222) : nothing}</svg>
              </button>`
            )}
          </div>
          <div class="views">
            <div class="view"><plan-grid .ox=${534} .oy=${104} minor="#dddfe1" major="#d6d8da"></plan-grid></div>
            <div class="view">
              <tilted-grid></tilted-grid>
              <svg class="axes" aria-hidden="true">
                <path d="M90 600V677L126 646M90 677L156 696" fill="none" stroke="#cfd0d2" />
                <text x="133" y="645" fill="#cfd0d2">y</text>
                <text x="163" y="698" fill="#cfd0d2">x</text>
              </svg>
              ${this.tag("Perspective", true)}
            </div>
            <div class="view"><plan-grid .ox=${534} .oy=${141} minor="#dddfe1" major="#d6d8da"></plan-grid></div>
            <div class="view">
              <plan-grid .ox=${89} .oy=${17} minor="#dddfe1" major="#d6d8da"></plan-grid>
              ${this.tag("Right")}
            </div>
          </div>
          <ul class="menu">
            ${this.entries.map((e) => this.row(e))}
          </ul>
        </section>
      </main>`;
  }
}
